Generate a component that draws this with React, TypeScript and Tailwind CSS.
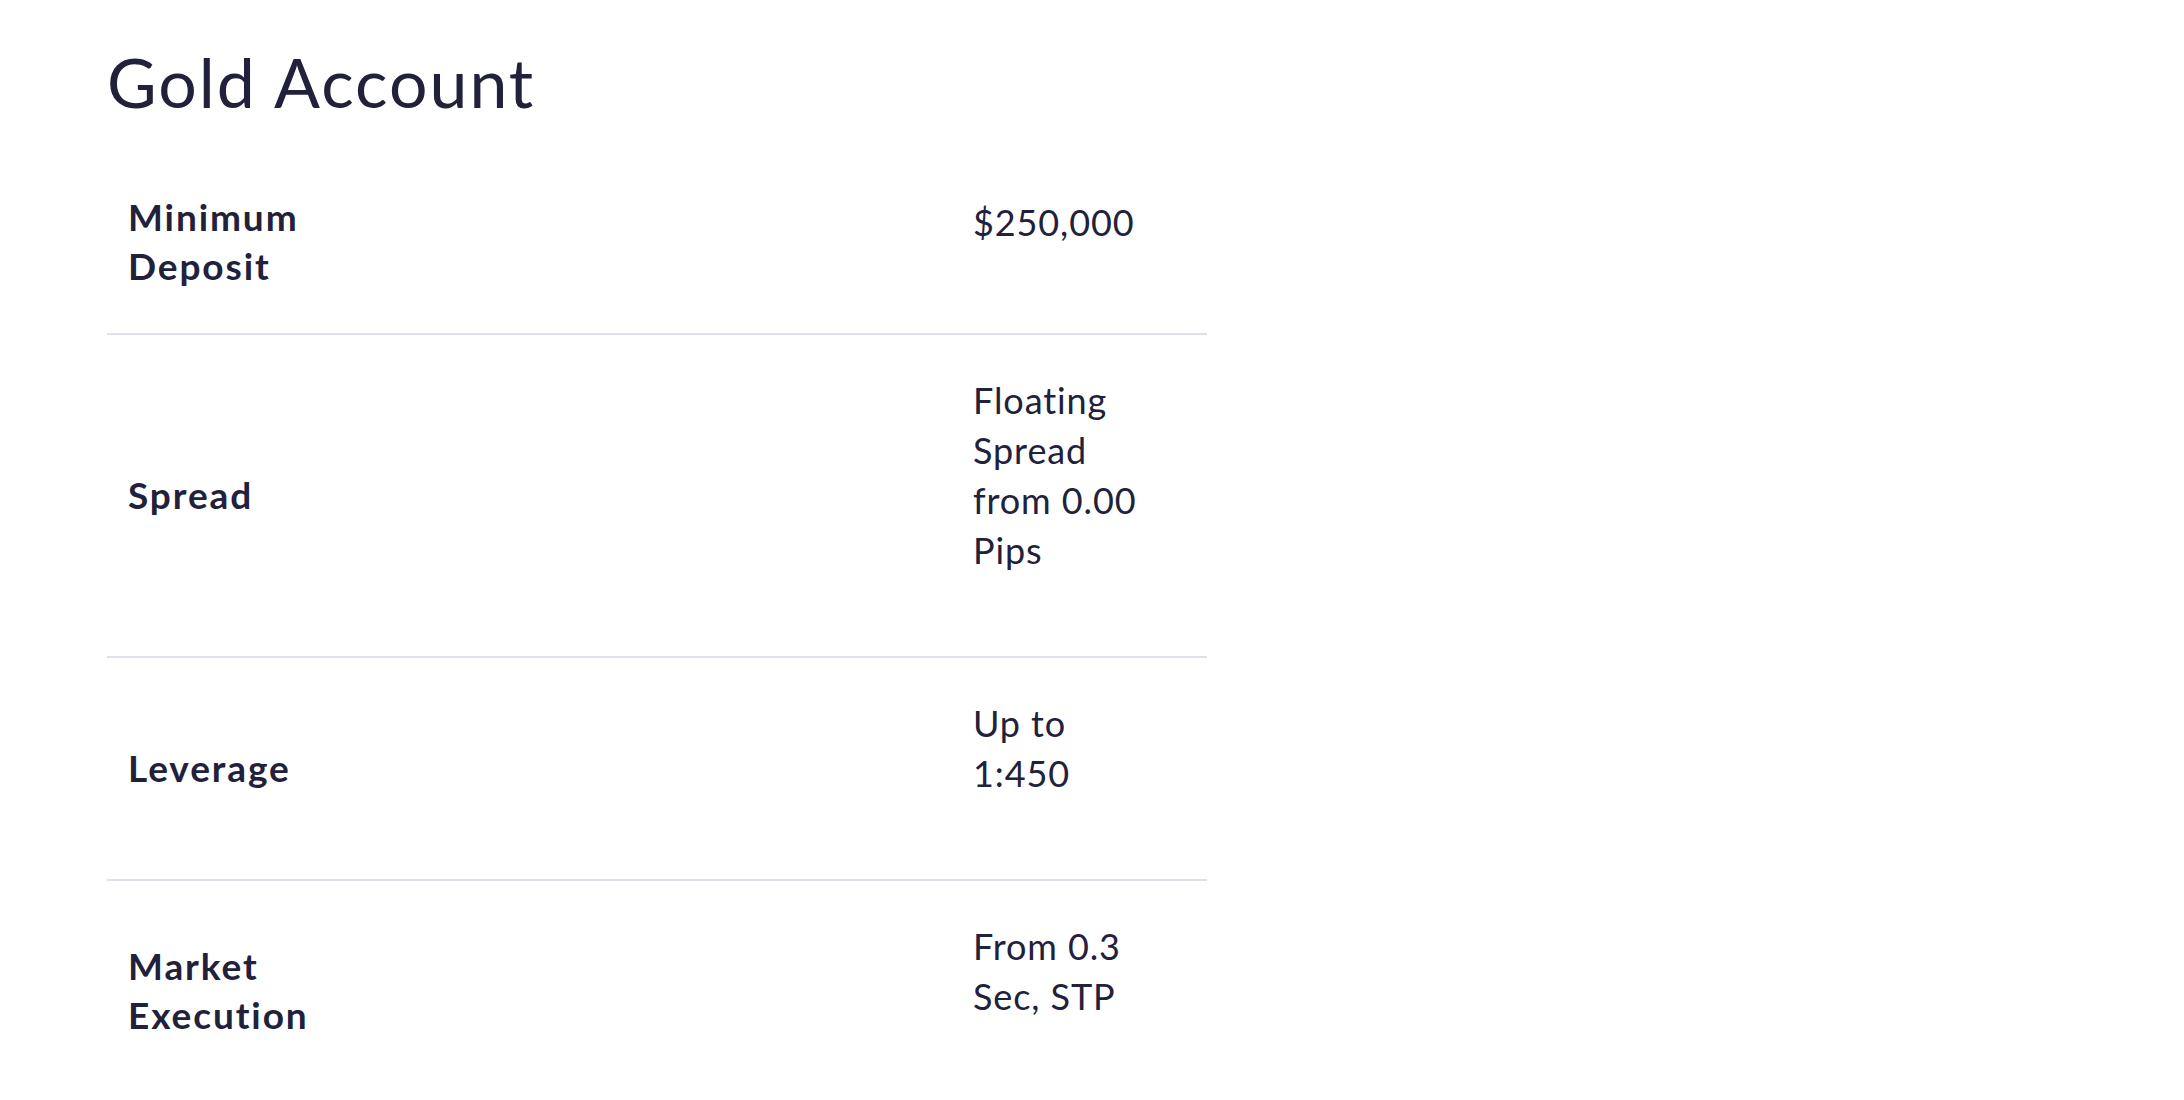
type Row = {
  label: string[];
  value: string;
  tall?: boolean;
};

const rows: Row[] = [
  { label: ["Minimum", "Deposit"], value: "$250,000", tall: true },
  { label: ["Spread"], value: "Floating Spread from 0.00 Pips" },
  { label: ["Leverage"], value: "Up to 1:450" },
  { label: ["Market", "Execution"], value: "From 0.3 Sec, STP" },
];

export default function App() {
  return (
    <div
      className="min-h-screen bg-white text-[#22213b]"
      style={{ fontFamily: "Lato, 'Noto Sans', sans-serif" }}
    >
      <div className="w-[1100px] ml-[107px]">
        <h1 className="pt-[48px] text-[68px] leading-none font-normal tracking-[2px]">
          Gold Account
        </h1>

        <div className="mt-[41px]">
          {rows.map((row, i) => (
            <div
              key={row.value}
              className={`flex items-center ${
                i < rows.length - 1 ? "border-b-2 border-[#e0e0ec]" : ""
              }`}
            >
              <div
                className={`flex-1 pl-[21px] text-[37px] leading-[49px] font-bold tracking-[1.9px] ${
                  row.tall ? "pb-[8px]" : "pb-[3px]"
                }`}
              >
                {row.label.map((l) => (
                  <div key={l}>{l}</div>
                ))}
              </div>
              <div
                className={`self-start w-[176px] mr-[58px] pt-[40px] text-[36px] leading-[50px] tracking-[0.9px] ${
                  row.tall ? "pb-[86px]" : "pb-[81px]"
                }`}
              >
                {row.value}
              </div>
            </div>
          ))}
        </div>
      </div>
    </div>
  );
}
